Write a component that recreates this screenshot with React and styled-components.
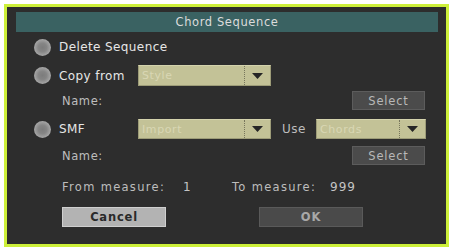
import React from "react";
import styled, { createGlobalStyle } from "styled-components";

const Global = createGlobalStyle`
  html, body {
    margin: 0;
    background: #ffffff;
  }
  body {
    font-family: "DejaVu Sans", "Liberation Sans", sans-serif;
  }
`;

function Dropdown({ value, width }) {
  return (
    <Drop $width={width}>
      <DropText>{value}</DropText>
      <DropArrow>
        <svg width="11" height="6" viewBox="0 0 11 6">
          <path d="M0 0 L11 0 L5.5 6 Z" fill="#262626" />
        </svg>
      </DropArrow>
    </Drop>
  );
}

function App() {
  return (
    <>
      <Global />
      <Page>
        <Frame>
          <TitleBar>Chord Sequence</TitleBar>
          <Body>
            <Row $top={6} $height={18}>
              <Radio />
              <Label>Delete Sequence</Label>
            </Row>
            <Row $top={9} $height={21}>
              <Radio />
              <Label $width={79}>Copy from</Label>
              <Dropdown value="Style" width={133} />
            </Row>
            <Row $top={5} $height={19}>
              <SubLabel $indent>Name:</SubLabel>
              <Spacer />
              <SmallButton>Select</SmallButton>
            </Row>
            <Row $top={9} $height={20}>
              <Radio />
              <Label $width={79}>SMF</Label>
              <Dropdown value="Import" width={133} />
              <UseLabel>Use</UseLabel>
              <Dropdown value="Chords" width={110} />
            </Row>
            <Row $top={7} $height={19}>
              <SubLabel $indent>Name:</SubLabel>
              <Spacer />
              <SmallButton>Select</SmallButton>
            </Row>
            <Row $top={14} $height={16}>
              <SubLabel $indent $wide $width={121}>From measure:</SubLabel>
              <Value $width={49}>1</Value>
              <SubLabel $wide $width={98}>To measure:</SubLabel>
              <Value>999</Value>
            </Row>
            <Row $top={12} $height={20}>
              <ActionButton $light>Cancel</ActionButton>
              <ActionButton>OK</ActionButton>
            </Row>
          </Body>
        </Frame>
      </Page>
    </>
  );
}

export default App;

const Page = styled.div`
  width: 452px;
  height: 250px;
  padding: 4px 0 0 4px;
  box-sizing: border-box;
`;

const Frame = styled.div`
  width: 445px;
  height: 243px;
  box-sizing: border-box;
  border: 3px solid #cdf03a;
  background: #2d2d2d;
  padding: 5px 8px 0 9px;
  display: flex;
  flex-direction: column;
`;

const TitleBar = styled.div`
  height: 20px;
  background: #3a6262;
  color: #dcdcdc;
  font-size: 11.5px;
  letter-spacing: 0.6px;
  display: flex;
  align-items: center;
  justify-content: center;
`;

const Body = styled.div`
  display: flex;
  flex-direction: column;
  padding-left: 18px;
  padding-right: 11px;
`;

const Row = styled.div`
  display: flex;
  align-items: center;
  margin-top: ${(p) => p.$top}px;
  height: ${(p) => p.$height}px;
`;

const Radio = styled.div`
  width: 17px;
  height: 17px;
  border-radius: 50%;
  flex: none;
  background: radial-gradient(
    circle at 50% 50%,
    #7c7c7c 0,
    #858585 35%,
    #a2a2a2 65%,
    #8e8e8e 100%
  );
  margin-right: 8px;
`;

const Label = styled.div`
  color: #e6e6e6;
  font-size: 12px;
  letter-spacing: 0.4px;
  width: ${(p) => (p.$width ? `${p.$width}px` : "auto")};
  flex: none;
`;

const SubLabel = styled.div`
  color: #bdbdbd;
  font-size: 11.5px;
  letter-spacing: ${(p) => (p.$wide ? "1.3px" : "0.6px")};
  margin-left: ${(p) => (p.$indent ? "28px" : "0")};
  width: ${(p) => (p.$width ? `${p.$width}px` : "auto")};
  flex: none;
`;

const Value = styled.div`
  color: #c4c4c4;
  font-size: 12px;
  letter-spacing: 1px;
  width: ${(p) => (p.$width ? `${p.$width}px` : "auto")};
  flex: none;
`;

const UseLabel = styled.div`
  color: #bdbdbd;
  font-size: 12px;
  letter-spacing: 0.5px;
  margin-left: 11px;
  width: 34px;
  flex: none;
`;

const Spacer = styled.div`
  flex: 1;
`;

const Drop = styled.div`
  width: ${(p) => p.$width}px;
  height: 100%;
  box-sizing: border-box;
  background: #c3c297;
  border: 1px solid #9d9c78;
  border-top-color: #d4d3ad;
  display: flex;
  align-items: center;
  flex: none;
`;

const DropText = styled.div`
  flex: 1;
  color: #d9d7b4;
  font-size: 11px;
  letter-spacing: 0.6px;
  padding-left: 3px;
`;

const DropArrow = styled.div`
  width: 25px;
  height: 100%;
  border-left: 1px dotted #77765c;
  display: flex;
  align-items: center;
  justify-content: center;
`;

const SmallButton = styled.div`
  width: 73px;
  height: 19px;
  box-sizing: border-box;
  background: #4b4b4b;
  border: 1px solid #5c5c5c;
  color: #b8b8b8;
  font-size: 11.5px;
  letter-spacing: 0.8px;
  display: flex;
  align-items: center;
  justify-content: center;
  margin-right: 2px;
`;

const ActionButton = styled.div`
  width: 104px;
  height: 20px;
  box-sizing: border-box;
  background: ${(p) => (p.$light ? "#b3b3b3" : "#4a4a4a")};
  border: 1px solid ${(p) => (p.$light ? "#cfcfcf" : "#5a5a5a")};
  color: ${(p) => (p.$light ? "#2a2a2a" : "#a8a8a8")};
  font-size: 11.5px;
  font-weight: bold;
  letter-spacing: 0.8px;
  display: flex;
  align-items: center;
  justify-content: center;
  margin-left: ${(p) => (p.$light ? "28px" : "93px")};
`;
